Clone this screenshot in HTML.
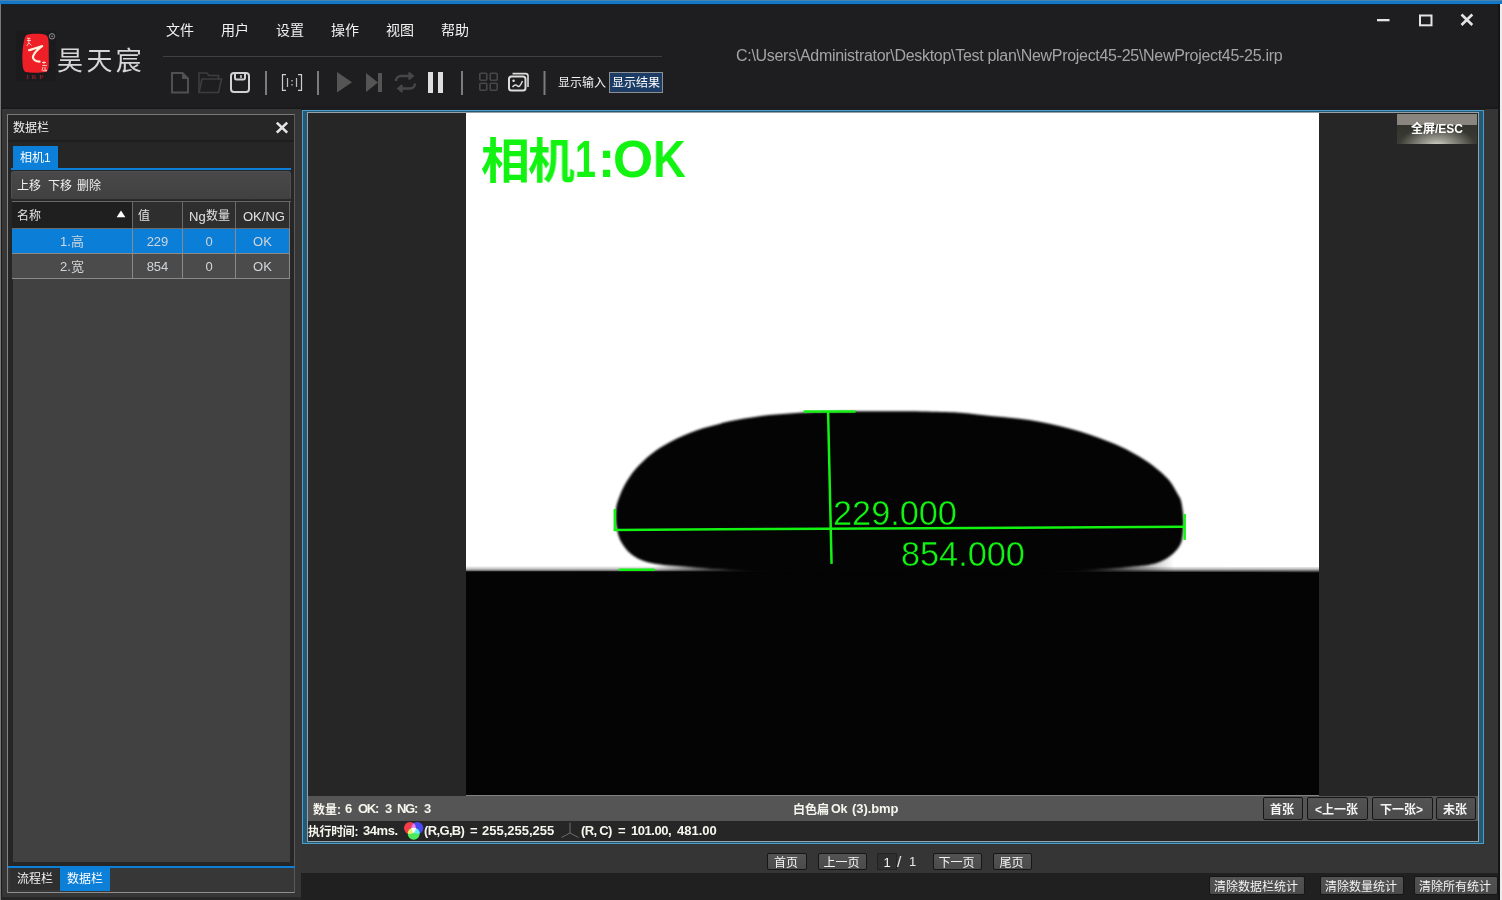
<!DOCTYPE html>
<html lang="zh-CN">
<head>
<meta charset="utf-8">
<title>昊天宸</title>
<style>
*{box-sizing:border-box;margin:0;padding:0}
html,body{width:1502px;height:900px;overflow:hidden;background:#1e1e20}
body{position:relative;font-family:"Liberation Sans","Noto Sans CJK SC",sans-serif;font-size:12px;color:#f0f0f0}
.abs{position:absolute}
.t,.td,.bt,svg{will-change:transform}
.t{position:absolute;white-space:nowrap;line-height:1}
/* top */
#topblue{left:0;top:0;width:1502px;height:5px;background:linear-gradient(#4a83b1 0,#4a83b1 1px,#1478c6 1px,#1478c6 4px,#0b2237 4px,#0b2237 5px)}
#winl{left:0;top:4px;width:1px;height:896px;background:#787878}
#header{left:1px;top:4px;width:1501px;height:105px;background:#1e1e20;border-bottom:2px solid #1a1a1c}
.menu{font-size:14px;color:#f2f2f2;top:23px}
#menuline{left:163px;top:56px;width:499px;height:1px;background:#3f3f41}
#path{left:735.5px;top:48px;font-size:16px;letter-spacing:-0.3px;color:#a4a4a4}
/* work area */
#work{left:1px;top:109px;width:1501px;height:764px;background:#353535}
#leftwrap{left:1px;top:109px;width:300px;height:791px;background:#363636;border-left:1px solid #1b1b1d}
#bottombar{left:301px;top:873px;width:1201px;height:27px;background:#202021}
/* data panel */
#dpanel{left:7px;top:114px;width:288px;height:779px;border:1px solid #848484;border-top-color:#7a7a7a;border-right-color:#59595c;border-bottom-color:#8e8e8e;background:#262626}
#dtitle{left:8px;top:115px;width:286px;height:25px;background:#262626}
#dtitleline{left:8px;top:140px;width:286px;height:2px;background:#1e1e1e}
#tab1{left:13px;top:146px;width:45px;height:22px;background:#0c7fd8}
#tabline{left:11px;top:168px;width:280px;height:2px;background:#0c7fd8}
#tbar{left:11px;top:171px;width:280px;height:29px;background:linear-gradient(#484848,#414141);border-radius:3px;border:1px solid #4f4f52;border-bottom-color:#2c2c2c}
#grid{left:12px;top:202px;width:279px;height:661px;background:#414141;border:1px solid #262626;border-top:none}
.th{position:absolute;top:202px;height:27px;background:#2e2e2e;border-right:1px solid #6a6a6a;border-bottom:1px solid #6a6a6a}
.td{position:absolute;height:25px;border-right:1px solid #8a8a8a;border-bottom:1px solid #8a8a8a;text-align:center;line-height:26px;color:#d2d6da;font-size:13px}
.r1{top:229px;background:#0b7ed7}
.r2{top:254px;background:#4b4b4b}
#btabline{left:8px;top:866px;width:287px;height:2px;background:#0c7fd8}
#btab2{left:60px;top:868px;width:50px;height:23px;background:#0c7fd8}
#btabs{left:8px;top:868px;width:286px;height:24px;background:#373737}
#btab1{left:10px;top:868px;width:50px;height:22px;background:#2f2f2f}
/* viewer */
#viewer{left:302px;top:110px;width:1182px;height:734px;border:1px solid #4c9dc7;background:#255a74}
#viewin{left:307px;top:112px;width:1172px;height:730px;border:1px solid #98a1a8;background:#262626}
#img{left:466px;top:113px;width:853px;height:683px;background:#fff;overflow:hidden}
#st1{left:308px;top:796px;width:1170px;height:25px;background:#555555}
#st2{left:308px;top:821px;width:1170px;height:20px;background:#262626}
.bt{position:absolute;height:19px;background:linear-gradient(#535353,#4b4b4b);border:1px solid #161616;border-radius:2px;color:#f4f4f4;font-size:12px;text-align:center;line-height:17px;white-space:nowrap;padding-right:2px}
.bb{font-weight:bold}

#logo{left:14px;top:28px;width:44px;height:56px}
#brand{left:57px;top:46px;font-size:26px;letter-spacing:3.4px;color:#d6d6d6;font-weight:400;font-family:"Noto Sans CJK SC","Liberation Sans",sans-serif}
#tbicons{left:160px;top:62px;width:400px;height:40px}
#showin{left:558px;top:77px;font-size:12px;color:#f2f2f2}
#showres{left:609px;top:72px;width:54px;height:21px;background:#1c3c66;border:1px solid #8c8f94}
#winctl{left:1360px;top:4px;width:140px;height:36px}
#winr{left:1500px;top:4px;width:2px;height:896px;background:#ededed}
#fsbtn{left:1397px;top:114px;width:80px;height:30px;background:radial-gradient(ellipse 48% 70% at 50% 108%, #dcdcd4 0%, #9a9a90 35%, rgba(80,80,72,0) 100%),linear-gradient(#4b4a43,#33332e 35%,#3c3c36 100%)}
#fsbtn:before{content:"";position:absolute;left:0;top:0;width:80px;height:11px;background:#8b8580}
.bg{color:#12f312;font-weight:700;transform-origin:0 0}
.bg.c{font-size:47.5px;font-family:"Noto Sans CJK SC",sans-serif}
.bg.l{font-size:51.5px}
#bigt1{left:480px;top:132px;font-size:46.5px;font-weight:700;color:#12f312;font-family:"Noto Sans CJK SC",sans-serif}
#bigt2{left:574px;top:135px;font-size:50px;font-weight:700;color:#12f312;letter-spacing:-1px}
</style>
</head>
<body>
<div class="abs" id="header"></div>
<div class="abs" id="topblue"></div>

<div class="t menu" style="left:166px">文件</div>
<div class="t menu" style="left:221px">用户</div>
<div class="t menu" style="left:276px">设置</div>
<div class="t menu" style="left:331px">操作</div>
<div class="t menu" style="left:386px">视图</div>
<div class="t menu" style="left:441px">帮助</div>
<div class="abs" id="menuline"></div>
<div class="t" id="path">C:\Users\Administrator\Desktop\Test plan\NewProject45-25\NewProject45-25.irp</div>


<!-- logo -->
<svg class="abs" id="logo" viewBox="14 28 44 56">
<rect x="16" y="31" width="40" height="50" fill="#1b1b1d"/>
<path d="M26.5,35 C30,33.4 42,33.2 46,35 C48.3,36.5 48.6,40 48.7,44 L48.8,64 C48.8,68 48,71 46,72 C40,73 30,73 25.5,72 C23,70.5 22.6,66 22.4,60 C22.2,54 22.8,46 24,41 C24.6,38 25.2,36 26.5,35Z" fill="#ee1f27"/>
<path d="M29,50.3 C33,49.2 38,47.5 42.2,46.1 C38,49 34.5,52.5 32.9,56.5 C32.6,59.5 35.5,61.4 39.6,61.6" stroke="#fff3e0" stroke-width="2.1" fill="none" stroke-linecap="round" stroke-linejoin="round"/>
<path d="M36,48.3 L42.2,46.1 L37,50.500z" fill="#fff3e0"/>
<path d="M27,40.5 h4 M28.8,38 v5 l-2,3 M29,43 l2.5,2.5 M27,38.3 h3.5" stroke="#ffe9e0" stroke-width=".8" fill="none"/>
<path d="M42,62.5 h4 M44,61.2 v3 M42.3,65.5 h4.5 M43,67 l-1,3.5 M45,67 v3 l1.8,.3 M42.5,70.8 h4.5" stroke="#ffe9e0" stroke-width=".8" fill="none"/>
<circle cx="52" cy="36.3" r="2.7" fill="none" stroke="#bdbdbd" stroke-width=".7"/>
<circle cx="52.1" cy="36.3" r=".7" fill="#bdbdbd"/>
<text x="36.2" y="79.3" font-family="Liberation Serif,serif" font-weight="bold" font-size="7" fill="#8c1f2c" text-anchor="middle" letter-spacing="2.6">IRP</text>
</svg>
<div class="t" id="brand">昊天宸</div>

<!-- toolbar icons -->
<svg class="abs" id="tbicons" viewBox="160 62 400 40" fill="none">
<path d="M172,73 h10.5 l5.5,5.5 v14 h-16z" stroke="#505050" stroke-width="2"/>
<path d="M182,73 l6,6 h-6z" fill="#505050"/>
<path d="M199,92.5 v-19.5 h8 l2,2.5 h9.5 v4" stroke="#3d3d3d" stroke-width="1.6"/>
<path d="M199,92.5 l3,-13.5 h19.5 l-3,13.5z" stroke="#3d3d3d" stroke-width="1.6"/>
<rect x="231" y="73" width="18" height="19" rx="3" stroke="#d2d2d2" stroke-width="2"/>
<path d="M235,73 v5 a1.5,1.5 0 0 0 1.5,1.5 h7 a1.5,1.5 0 0 0 1.5,-1.5 v-5" stroke="#d2d2d2" stroke-width="2"/>
<path d="M241,75 v3" stroke="#d2d2d2" stroke-width="1.5"/>
<rect x="265" y="71" width="2" height="24" fill="#7c7c7c"/>
<path d="M286,74.7 h-3.5 v15.6 h3.5 M298,74.7 h3.5 v15.6 h-3.5" stroke="#cdcdcd" stroke-width="1.2"/>
<path d="M287.5,78 v9 M296.5,78 v9" stroke="#bdbdbd" stroke-width="1.2"/>
<rect x="291.4" y="80" width="1.3" height="1.5" fill="#bdbdbd"/><rect x="291.4" y="84" width="1.3" height="1.5" fill="#bdbdbd"/>
<rect x="317" y="71" width="2" height="24" fill="#7c7c7c"/>
<path d="M337,72 L352,82.2 L337,92.4z" fill="#555"/>
<path d="M366,73 L378,82.5 L366,92z" fill="#555"/>
<rect x="378" y="73" width="4" height="19" fill="#555"/>
<path d="M396,81 a5,5 0 0 1 5,-5 h11 M408.5,72.8 l4,3.2 l-4,3.2" stroke="#474747" stroke-width="2.4"/>
<path d="M415,83.5 a5,5 0 0 1 -5,5 h-11 M402.5,85.3 l-4,3.2 l4,3.2" stroke="#474747" stroke-width="2.4"/>
<rect x="428" y="72" width="5" height="21" fill="#dedede"/>
<rect x="438" y="72" width="5" height="21" fill="#dedede"/>
<rect x="461" y="71" width="2" height="24" fill="#7c7c7c"/>
<g stroke="#474747" stroke-width="1.6">
<rect x="479.8" y="73.3" width="7" height="7" rx="1"/><rect x="490.2" y="73.3" width="7" height="7" rx="1"/>
<rect x="479.8" y="83.3" width="7" height="7" rx="1"/><rect x="490.2" y="83.3" width="7" height="7" rx="1"/>
</g>
<rect x="509" y="76.5" width="16.5" height="14" rx="2.5" stroke="#dcdcdc" stroke-width="2"/>
<path d="M512.5,73.6 h13 a2.5,2.5 0 0 1 2.5,2.5 v11" stroke="#dcdcdc" stroke-width="1.6"/>
<circle cx="513.6" cy="80.8" r="1.3" fill="#dcdcdc"/>
<path d="M512.5,87 c2,-2.5 3.5,-2.5 5,-1 s3,-.5 5,-5" stroke="#dcdcdc" stroke-width="1.5"/>
<rect x="543.5" y="71" width="2" height="24" fill="#7c7c7c"/>
</svg>
<div class="t" id="showin">显示输入</div>
<div class="abs" id="showres"></div>
<div class="t" style="left:612px;top:77px;font-size:12px;color:#fff">显示结果</div>

<!-- window controls -->
<svg class="abs" id="winctl" viewBox="1360 4 140 36" fill="none">
<rect x="1377" y="19" width="12.5" height="2.3" fill="#e4e4e4"/>
<rect x="1420" y="15.5" width="11.5" height="9.8" stroke="#e4e4e4" stroke-width="2"/>
<path d="M1461.5,14.5 l10.800,10.5 M1472.300,14.5 l-10.800,10.5" stroke="#e4e4e4" stroke-width="2.6"/>
</svg>

<div class="abs" id="work"></div>
<div class="abs" id="leftwrap"></div>
<div class="abs" id="bottombar"></div>
<div class="abs" style="left:1px;top:897px;width:300px;height:3px;background:#262626"></div>
<div class="abs" id="winl"></div>

<!-- data panel -->
<div class="abs" id="dpanel"></div>
<div class="abs" id="dtitleline"></div>
<div class="t" style="left:13px;top:122px;font-size:12px;color:#f0f0f0">数据栏</div>
<svg class="abs" style="left:274px;top:120px;width:16px;height:16px" viewBox="274 120 16 16"><path d="M276.8,122.6 l10.4,10 M287.2,122.6 l-10.4,10" stroke="#e6e6e6" stroke-width="2.6" fill="none"/></svg>
<div class="abs" id="tab1"></div>
<div class="t" style="left:20px;top:152px;font-size:12px;color:#fff">相机1</div>
<div class="abs" id="tabline"></div>
<div class="abs" id="tbar"></div>
<div class="t" style="left:17px;top:180px;font-size:12px;color:#f0f0f0">上移</div><div class="t" style="left:47.5px;top:180px;font-size:12px;color:#f0f0f0">下移</div><div class="t" style="left:76.5px;top:180px;font-size:12px;color:#f0f0f0">删除</div>
<div class="abs" id="grid"></div>
<div class="th" style="left:12px;width:121px;background:#1f1f1f"></div>
<div class="th" style="left:133px;width:50px"></div>
<div class="th" style="left:183px;width:53px"></div>
<div class="th" style="left:236px;width:54px"></div>
<div class="t" style="left:17px;top:210px;color:#e2e2e2">名称</div>
<svg class="abs" style="left:115px;top:209px;width:12px;height:10px" viewBox="115 209 12 10"><path d="M121,210.6 L125.4,217.3 H116.6z" fill="#fff"/></svg>
<div class="abs" style="left:12px;top:201px;width:279px;height:1px;background:#686868"></div>
<div class="t" style="left:138px;top:210px;color:#e2e2e2">值</div>
<div class="t" style="left:189px;top:209.5px;color:#e2e2e2;font-size:13px">Ng</div><div class="t" style="left:206px;top:210px;color:#e2e2e2;font-size:12px">数量</div>
<div class="t" style="left:242.5px;top:209.5px;color:#e2e2e2;font-size:13px">OK/NG</div>
<div class="td r1" style="left:12px;width:121px">1.高</div>
<div class="td r1" style="left:133px;width:50px">229</div>
<div class="td r1" style="left:183px;width:53px">0</div>
<div class="td r1" style="left:236px;width:54px">OK</div>
<div class="td r2" style="left:12px;width:121px">2.宽</div>
<div class="td r2" style="left:133px;width:50px">854</div>
<div class="td r2" style="left:183px;width:53px">0</div>
<div class="td r2" style="left:236px;width:54px">OK</div>
<div class="abs" id="btabline"></div>
<div class="abs" id="btabs"></div><div class="abs" id="btab1"></div><div class="abs" id="btab2"></div>
<div class="t" style="left:17px;top:873px;color:#f0f0f0">流程栏</div>
<div class="t" style="left:67px;top:873px;color:#fff">数据栏</div>

<!-- viewer -->
<div class="abs" style="left:301px;top:108px;width:1184px;height:2px;background:#1e1e20"></div>
<div class="abs" id="viewer"></div>
<div class="abs" id="viewin"></div>
<svg class="abs" id="img" viewBox="466 113 854 683">
<defs>
<filter id="bl" x="-5%" y="-5%" width="110%" height="110%" color-interpolation-filters="sRGB"><feGaussianBlur stdDeviation="1.1"/></filter>
<linearGradient id="sg" x1="0" y1="0" x2="0" y2="1"><stop offset="0" stop-color="#fff"/><stop offset=".45" stop-color="#c0c0c0"/><stop offset="1" stop-color="#040404"/></linearGradient>
<linearGradient id="wl" x1="0" y1="0" x2="1" y2="0"><stop offset="0" stop-color="#040404" stop-opacity="0"/><stop offset="1" stop-color="#040404" stop-opacity="1"/></linearGradient>
<linearGradient id="wr" x1="1" y1="0" x2="0" y2="0"><stop offset="0" stop-color="#040404" stop-opacity="0"/><stop offset="1" stop-color="#040404" stop-opacity="1"/></linearGradient>
</defs>
<rect x="466" y="113" width="854" height="683" fill="#fff"/>
<path d="M466,566 L1320,567 L1320,573 L466,572z" fill="url(#sg)"/>
<path d="M466,571.3 L1320,572.3 L1320,796 L466,796z" fill="#040404"/>
<rect x="655" y="556" width="100" height="16" fill="url(#wl)"/>
<rect x="754.5" y="556" width="321" height="16" fill="#040404"/>
<rect x="1075" y="556" width="100" height="16" fill="url(#wr)"/>
<path filter="url(#bl)" fill="#040404" d="M750.0,571.0C727.8,570.2 725.7,569.8 716.5,569.2C707.3,568.6 702.1,568.1 695.0,567.6C687.9,567.1 680.7,566.6 674.0,566.0C667.3,565.4 659.7,564.7 654.7,563.9C649.7,563.1 647.4,562.5 644.0,561.2C640.6,560.0 637.3,558.3 634.5,556.4C631.7,554.5 629.1,552.3 627.0,550.0C624.9,547.7 623.1,545.1 621.7,542.6C620.3,540.1 619.4,537.9 618.5,535.0C617.6,532.1 616.9,528.2 616.4,525.0C615.9,521.8 615.8,518.8 615.8,516.0C615.8,513.2 615.9,510.5 616.3,508.0C616.7,505.5 616.8,504.3 618.0,501.0C619.2,497.7 621.3,492.1 623.3,488.0C625.3,483.9 627.8,480.0 630.0,476.7C632.2,473.4 633.4,471.6 636.7,468.0C640.0,464.4 645.6,459.0 650.0,455.3C654.4,451.6 658.8,448.8 663.3,446.0C667.8,443.2 672.2,440.9 676.7,438.7C681.2,436.5 685.6,434.7 690.0,433.0C694.4,431.3 698.8,429.7 703.3,428.3C707.8,426.9 712.2,425.9 716.7,424.7C721.2,423.5 725.6,422.3 730.0,421.3C734.4,420.3 738.8,419.5 743.3,418.7C747.8,417.9 752.2,417.3 756.7,416.7C761.2,416.1 765.6,415.4 770.0,415.0C774.4,414.6 778.8,414.3 783.3,414.0C787.8,413.7 792.2,413.3 796.7,413.0C801.2,412.7 805.0,412.5 810.0,412.3C815.0,412.1 817.2,412.0 826.6,411.8C836.0,411.6 853.3,411.3 866.6,411.2C879.9,411.1 893.2,411.1 906.5,411.2C919.8,411.3 935.4,411.6 946.5,412.0C957.6,412.4 964.1,413.1 973.0,413.9C981.9,414.7 992.2,415.9 1000.0,416.7C1007.8,417.5 1013.3,417.9 1020.0,418.7C1026.7,419.5 1033.3,420.4 1040.0,421.6C1046.7,422.8 1053.3,424.4 1060.0,426.0C1066.7,427.6 1073.3,429.3 1080.0,431.3C1086.7,433.3 1093.3,435.6 1100.0,438.0C1106.7,440.4 1114.5,443.6 1120.0,446.0C1125.5,448.4 1128.8,450.2 1133.3,452.7C1137.8,455.1 1142.2,457.7 1146.7,460.7C1151.2,463.7 1156.0,467.3 1160.0,470.7C1164.0,474.1 1167.7,477.5 1170.7,481.3C1173.7,485.1 1176.2,490.2 1178.0,493.3C1179.8,496.4 1180.7,497.2 1181.6,500.0C1182.5,502.8 1183.0,506.7 1183.5,510.0C1184.0,513.3 1184.3,517.2 1184.4,520.0C1184.5,522.8 1184.6,523.6 1184.3,527.0C1184.0,530.4 1183.6,537.0 1182.7,540.5C1181.8,544.0 1180.8,545.5 1179.0,548.0C1177.2,550.5 1174.6,553.3 1172.0,555.4C1169.4,557.5 1166.3,559.3 1163.5,560.7C1160.7,562.1 1158.6,563.0 1155.0,563.9C1151.4,564.8 1147.0,565.4 1142.0,566.0C1137.0,566.6 1131.3,567.1 1125.0,567.6C1118.7,568.1 1111.1,568.7 1104.0,569.2C1096.9,569.7 1099.9,569.7 1082.6,570.5C1065.3,571.3 1038.8,573.4 1000.0,574.0C961.2,574.6 891.7,574.5 850.0,574.0C808.3,573.5 772.2,571.8 750.0,571.0Z"/>
<g stroke="#12f312" stroke-width="2.5" fill="none" stroke-linecap="butt">
<path d="M804,411.5 H856"/>
<path d="M828.500,411 L832,564"/>
<path d="M614,530 L1186,526.8"/>
<path d="M615,509 V531"/>
<path d="M1185.500,514 V540"/>
<path d="M619,570 H655"/>
</g>
<text x="833.5" y="525.2" font-family="Liberation Sans,sans-serif" font-size="34.3" fill="#12f312" stroke="#040404" stroke-width="0.45">229.000</text>
<text x="901.5" y="566" font-family="Liberation Sans,sans-serif" font-size="34.3" fill="#12f312" stroke="#040404" stroke-width="0.45">854.000</text>
</svg>
<div class="t bg c" style="left:480.6px;top:134px;transform:scaleX(1.03)">相</div>
<div class="t bg c" style="left:527.5px;top:134px;transform:scaleX(.985)">机</div>
<div class="t bg l" style="left:574.6px;top:133.5px;transform:scaleX(.73)">1</div>
<div class="t bg l" style="left:598.3px;top:133.5px">:</div>
<div class="t bg l" style="left:613px;top:133.5px">O</div>
<div class="t bg l" style="left:653.3px;top:133.5px;transform:scaleX(.88)">K</div>
<div class="abs" id="fsbtn"></div>
<div class="t bb" style="left:1411px;top:123px;font-size:12px;color:#fff">全屏/ESC</div>

<div class="abs" id="st1"></div>
<div class="abs" id="st2"></div>
<!--FIT-->
<div class="t bb" style="left:312.5px;top:804px;font-size:12px;letter-spacing:-0.0px;color:#f6f6ee">数量:</div>
<div class="t bb" style="left:345px;top:802px;font-size:13px;letter-spacing:0px;color:#f6f6ee">6</div>
<div class="t bb" style="left:357.7px;top:802px;font-size:13px;letter-spacing:-1.25px;color:#f6f6ee">OK:</div>
<div class="t bb" style="left:384.7px;top:802px;font-size:13px;letter-spacing:0px;color:#f6f6ee">3</div>
<div class="t bb" style="left:396.9px;top:802px;font-size:13px;letter-spacing:-1.3px;color:#f6f6ee">NG:</div>
<div class="t bb" style="left:424.4px;top:802px;font-size:13px;letter-spacing:0px;color:#f6f6ee">3</div>
<div class="t bb" style="left:308.3px;top:826px;font-size:12px;letter-spacing:-0.4px;color:#f6f6ee">执行时间:</div>
<div class="t bb" style="left:363.3px;top:824px;font-size:13px;letter-spacing:-0.44px;color:#f6f6ee">34ms.</div>
<div class="t bb" style="left:424.4px;top:824px;font-size:13px;letter-spacing:-0.64px;color:#f6f6ee">(R,G,B)</div>
<div class="t bb" style="left:470px;top:824px;font-size:13px;letter-spacing:0px;color:#f6f6ee">=</div>
<div class="t bb" style="left:482.4px;top:824px;font-size:13px;letter-spacing:-0.01px;color:#f6f6ee">255,255,255</div>
<div class="t bb" style="left:581px;top:824px;font-size:13px;letter-spacing:-0.67px;color:#f6f6ee">(R, C)</div>
<div class="t bb" style="left:618px;top:824px;font-size:13px;letter-spacing:0px;color:#f6f6ee">=</div>
<div class="t bb" style="left:631px;top:824px;font-size:13px;letter-spacing:-0.46px;color:#f6f6ee">101.00,</div>
<div class="t bb" style="left:677px;top:824px;font-size:13px;letter-spacing:0.01px;color:#f6f6ee">481.00</div>
<div class="t bb" style="left:793.4px;top:804px;font-size:12px;letter-spacing:-0.0px;color:#f6f6ee">白色扁</div>
<div class="t bb" style="left:830.6px;top:802.6px;font-size:12.5px;letter-spacing:-0.12px;color:#f6f6ee">Ok</div>
<div class="t bb" style="left:851.8px;top:802px;font-size:13px;letter-spacing:-0.07px;color:#f6f6ee">(3).bmp</div>
<!--/FIT-->

<div class="bt bb" style="left:1263px;top:797px;width:40px;height:23px;line-height:25px">首张</div>
<div class="bt bb" style="left:1307px;top:797px;width:61px;height:23px;line-height:25px">&lt;上一张</div>
<div class="bt bb" style="left:1372px;top:797px;width:61px;height:23px;line-height:25px">下一张&gt;</div>
<div class="bt bb" style="left:1436px;top:797px;width:40px;height:23px;line-height:25px">未张</div>
<svg class="abs" style="left:403px;top:820px;width:22px;height:21px" viewBox="403 820 22 21">
<defs><clipPath id="cr"><circle cx="410" cy="827.9" r="6"/></clipPath><clipPath id="cb"><circle cx="417.3" cy="827.9" r="6"/></clipPath><clipPath id="cg"><circle cx="413.7" cy="833.8" r="6"/></clipPath></defs>
<circle cx="410" cy="827.9" r="6" fill="#f43c4a"/><circle cx="417.3" cy="827.9" r="6" fill="#4a4af4"/><circle cx="413.7" cy="833.8" r="6" fill="#4aea5c"/>
<circle cx="417.3" cy="827.9" r="6" fill="#f07cf4" clip-path="url(#cr)"/>
<circle cx="413.7" cy="833.8" r="6" fill="#f4ec60" clip-path="url(#cr)"/>
<circle cx="413.7" cy="833.8" r="6" fill="#62ecf0" clip-path="url(#cb)"/>
<g clip-path="url(#cr)"><circle cx="413.7" cy="833.8" r="6" fill="#fff" clip-path="url(#cb)"/></g>
</svg>
<svg class="abs" style="left:558px;top:821px;width:24px;height:20px" viewBox="558 821 24 20" fill="none" stroke="#6e6e6e" stroke-width="1">
<path d="M570,822.5 V833 L561.5,837.5 M570,833 L578.5,837.5"/>
</svg>
<div class="bt" style="left:767px;top:853px;width:40px;height:17px;line-height:19px">首页</div>
<div class="bt" style="left:818px;top:853px;width:49px;height:17px;line-height:19px">上一页</div>
<div class="bt" style="left:877px;top:853px;width:20px;height:17px;line-height:17px;font-size:13px;padding-right:0;border-radius:0;border-color:#222;background:#2f2f2f">1</div>
<div class="t" style="left:896.5px;top:854px;font-size:15.5px;color:#e8e8e8">/</div>
<div class="t" style="left:908.5px;top:855px;font-size:13px;color:#e8e8e8">1</div>
<div class="bt" style="left:933px;top:853px;width:49px;height:17px;line-height:19px">下一页</div>
<div class="bt" style="left:993px;top:853px;width:39px;height:17px;line-height:19px">尾页</div>
<div class="bt" style="left:1209px;top:876px;width:96px;height:19px;line-height:21px">清除数据栏统计</div>
<div class="bt" style="left:1320px;top:876px;width:84px;height:19px;line-height:21px">清除数量统计</div>
<div class="bt" style="left:1414px;top:876px;width:84px;height:19px;line-height:21px">清除所有统计</div>

<div class="abs" style="left:1498px;top:4px;width:2px;height:896px;background:#151515"></div>
<div class="abs" id="winr"></div>
</body>
</html>
